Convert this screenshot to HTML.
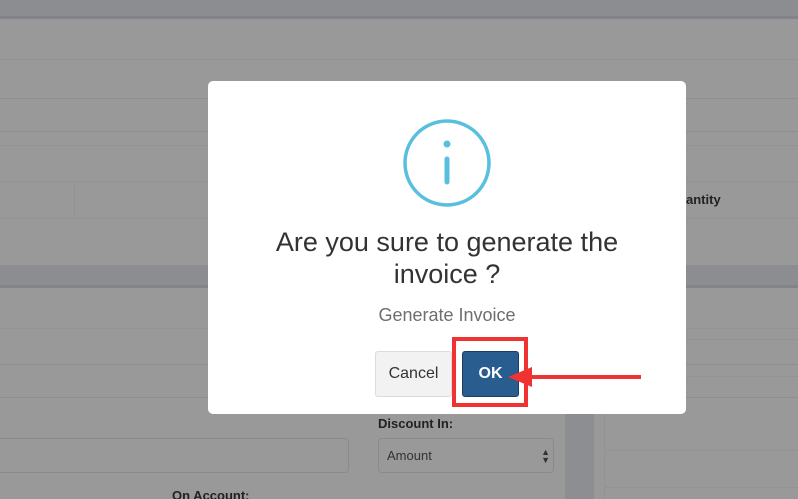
<!DOCTYPE html>
<html><head><style>
html,body{margin:0;width:798px;height:499px;overflow:hidden}
body{background:#999;position:relative;font-family:"Liberation Sans",sans-serif}
.a{position:absolute}
.h{position:absolute;left:0;right:0;height:1px;background:#8e8e92}
</style></head><body>
<div class="a" style="left:0;top:0;width:798px;height:16px;background:#8c8d91"></div>
<div class="a" style="left:0;top:16px;width:798px;height:3px;background:#838489"></div>
<div class="h" style="top:59px;background:#939396"></div>
<div class="h" style="top:98px"></div>
<div class="h" style="top:131px"></div>
<div class="h" style="top:145px;background:#939396"></div>
<div class="h" style="top:181px;background:#939396"></div>
<div class="a" style="left:74px;top:181px;width:1px;height:37px;background:#939396"></div>
<div class="h" style="top:218px;background:#939396"></div>
<div class="a" style="left:0;top:265px;width:798px;height:22px;background:#8c8d91"></div>
<div class="a" style="left:0;top:285px;width:798px;height:3px;background:#838489"></div>
<div class="h" style="top:328px;background:#939396"></div>
<div class="h" style="top:364px"></div>
<div class="h" style="top:397px"></div>
<div class="a" style="left:565px;top:287px;width:29px;height:212px;background:#8d8e92"></div>
<div class="a" style="left:594px;top:287px;width:10px;height:212px;background:#999"></div>
<div class="a" style="left:604px;top:287px;width:1px;height:212px;background:#939396"></div>
<div class="a" style="left:604px;top:339px;width:194px;height:1px;background:#939396"></div>
<div class="a" style="left:604px;top:376px;width:194px;height:1px;background:#939396"></div>
<div class="a" style="left:604px;top:450px;width:194px;height:1px;background:#939396"></div>
<div class="a" style="left:604px;top:487px;width:194px;height:1px;background:#939396"></div>
<div class="a" style="left:686px;top:192px;font-size:13px;font-weight:bold;color:#222">antity</div>
<div class="a" style="left:-10px;top:438px;width:357px;height:33px;border:1px solid #8a8a8a;border-radius:4px"></div>
<div class="a" style="left:378px;top:416px;font-size:13px;font-weight:bold;color:#222">Discount In:</div>
<div class="a" style="left:378px;top:438px;width:174px;height:33px;border:1px solid #8a8a8a;border-radius:4px;font-size:13px;color:#333;line-height:33px;text-indent:8px">Amount<span style="position:absolute;right:3px;top:0;font-size:9px;line-height:8px;padding-top:9px;text-indent:0">▲<br>▼</span></div>
<div class="a" style="left:172px;top:488px;font-size:13px;font-weight:bold;color:#222">On Account:</div>

<div class="a" style="left:208px;top:81px;width:478px;height:333px;background:#fff;border-radius:5px">
<svg class="a" style="left:0;top:0" width="478" height="200"><circle cx="239" cy="82" r="42" fill="none" stroke="#58bfdf" stroke-width="3.5"/><circle cx="239" cy="63" r="3.5" fill="#58bfdf"/><line x1="239" y1="78" x2="239" y2="101" stroke="#58bfdf" stroke-width="5" stroke-linecap="round"/></svg>
<div class="a" style="left:0;width:478px;top:145px;text-align:center;font-size:27px;line-height:32px;color:#333">Are you sure to generate the<br>invoice ?</div>
<div class="a" style="left:0;width:478px;top:224px;text-align:center;font-size:18px;color:#6e6e6e">Generate Invoice</div>
<div class="a" style="left:167px;top:270px;width:75px;height:44px;background:#f2f2f2;border:1px solid #dcdcdc;border-radius:3px;font-size:16px;color:#333;text-align:center;line-height:44px">Cancel</div>
<div class="a" style="left:254px;top:270px;width:55px;height:44px;background:#2a5d8f;border:1px solid #1c3d5e;border-radius:3px;font-size:16px;font-weight:bold;color:#fff;text-align:center;line-height:44px">OK</div>
<div class="a" style="left:244px;top:256px;width:68px;height:62px;border:4px solid #ef3232"></div>
</div>
<svg class="a" style="left:500px;top:360px" width="150" height="35"><line x1="20" y1="17" x2="141" y2="17" stroke="#ef3232" stroke-width="4"/><polygon points="8,17 32,7 32,27" fill="#ef3232"/></svg>
</body></html>
